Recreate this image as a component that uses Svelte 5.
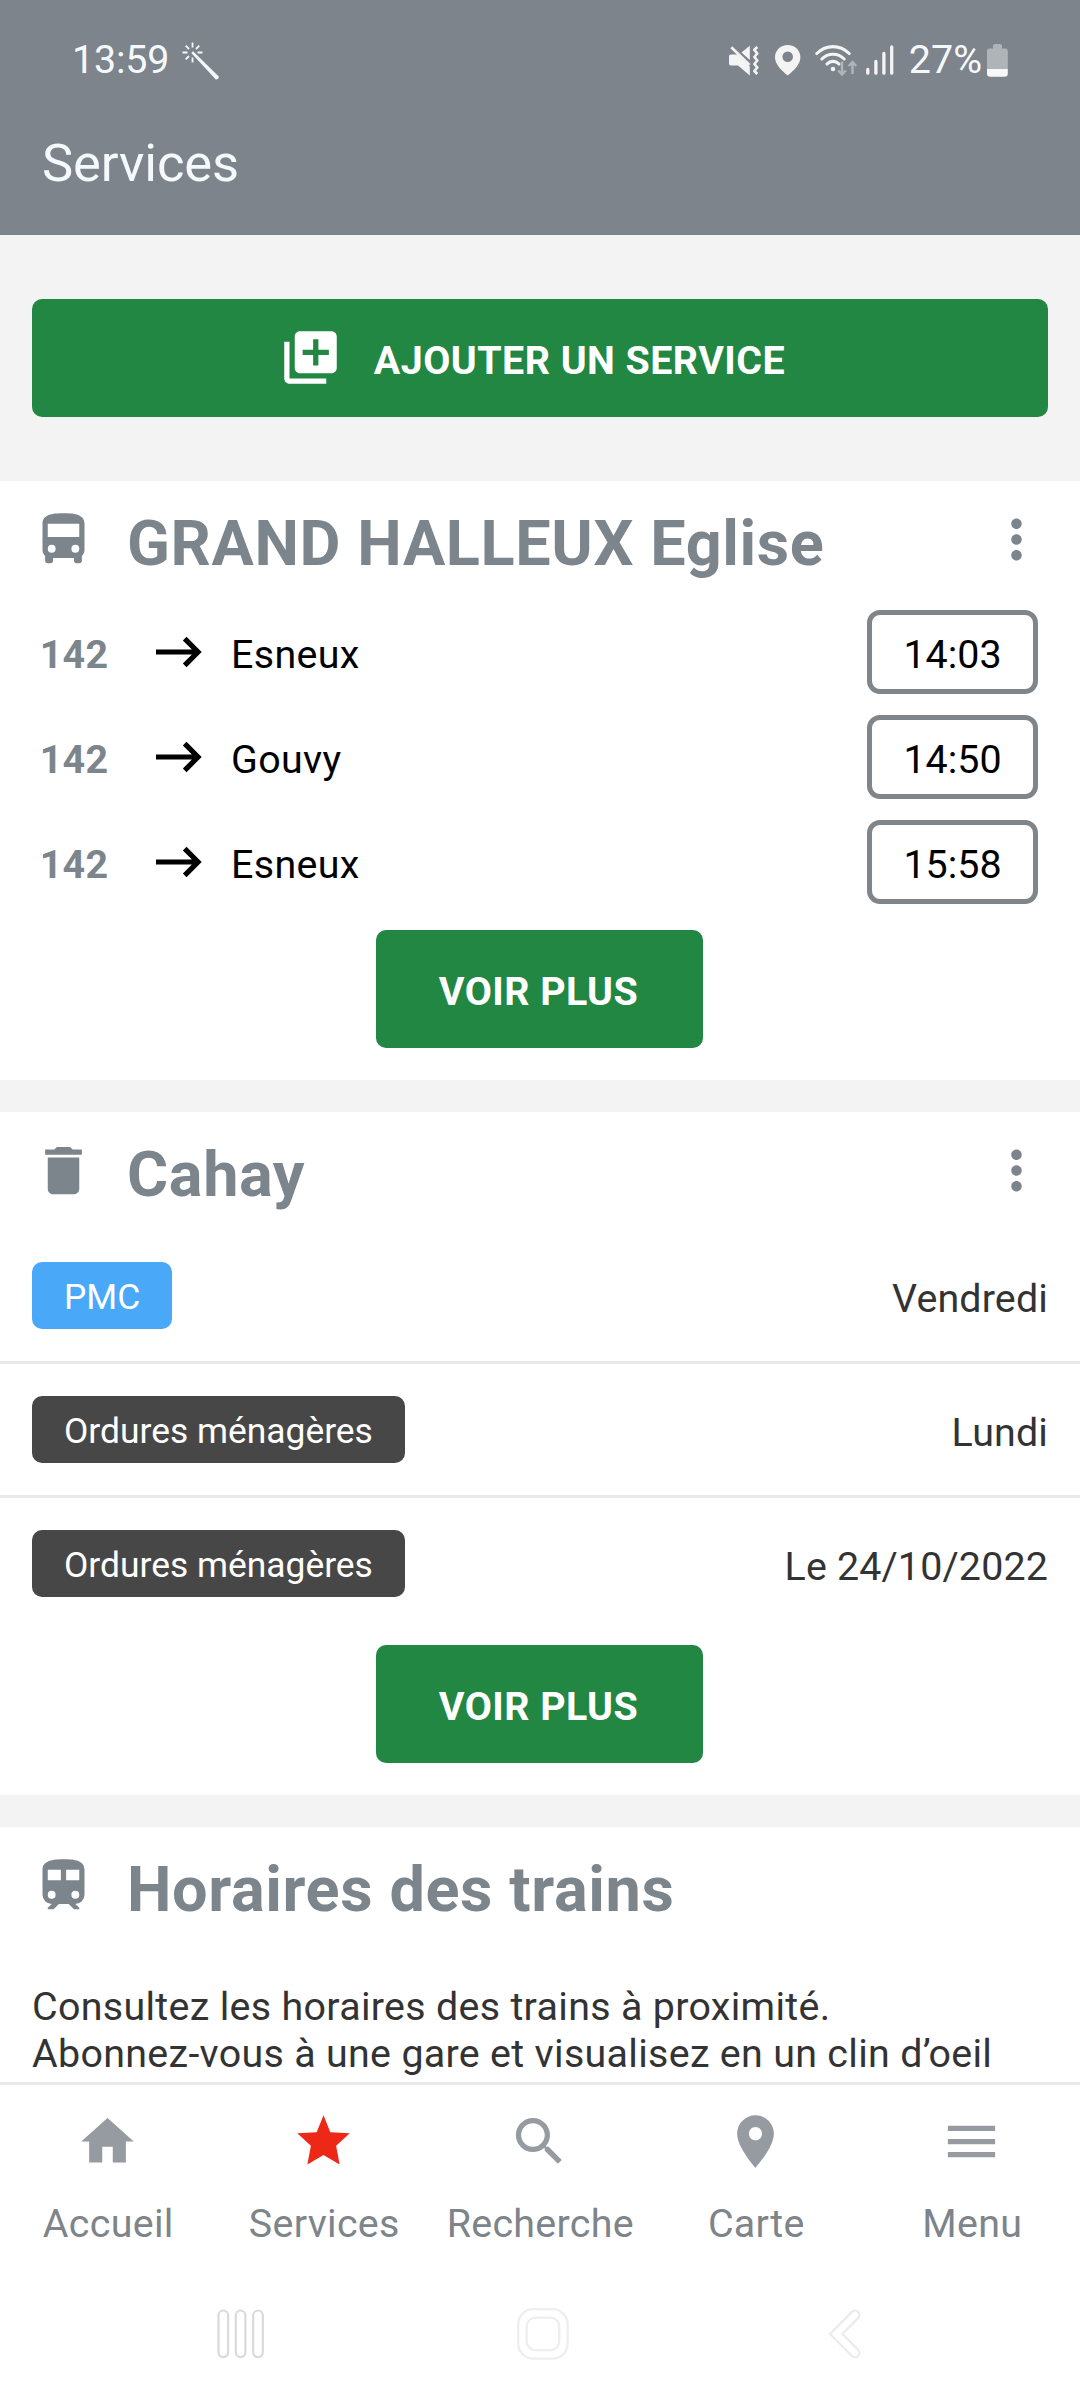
<script lang="ts">
    const icons = {
        bus: "M18,11H6V6H18M16.5,17A1.5,1.5 0 0,1 15,15.5A1.5,1.5 0 0,1 16.5,14A1.5,1.5 0 0,1 18,15.5A1.5,1.5 0 0,1 16.5,17M7.5,17A1.5,1.5 0 0,1 6,15.5A1.5,1.5 0 0,1 7.5,14A1.5,1.5 0 0,1 9,15.5A1.5,1.5 0 0,1 7.5,17M4,16C4,16.88 4.39,17.67 5,18.22V20A1,1 0 0,0 6,21H7A1,1 0 0,0 8,20V19H16V20A1,1 0 0,0 17,21H18A1,1 0 0,0 19,20V18.22C19.61,17.67 20,16.88 20,16V6C20,2.5 16.42,2 12,2C7.58,2 4,2.5 4,6V16Z",
        trash: "M6 19c0 1.1.9 2 2 2h8c1.1 0 2-.9 2-2V7H6v12zM19 4h-3.5l-1-1h-5l-1 1H5v2h14V4z",
        train: "M12,2C8,2 4,2.5 4,6V15.5A3.5,3.5 0 0,0 7.5,19L6,20.5V21H8.23L10.23,19H14L16,21H18V20.5L16.5,19A3.5,3.5 0 0,0 20,15.5V6C20,2.5 16.42,2 12,2M7.5,17A1.5,1.5 0 0,1 6,15.5A1.5,1.5 0 0,1 7.5,14A1.5,1.5 0 0,1 9,15.5A1.5,1.5 0 0,1 7.5,17M11,10H6V6H11V10M13,10V6H18V10H13M16.5,17A1.5,1.5 0 0,1 15,15.5A1.5,1.5 0 0,1 16.5,14A1.5,1.5 0 0,1 18,15.5A1.5,1.5 0 0,1 16.5,17Z",
        more: "M12 8c1.1 0 2-.9 2-2s-.9-2-2-2-2 .9-2 2 .9 2 2 2zm0 2c-1.1 0-2 .9-2 2s.9 2 2 2 2-.9 2-2-.9-2-2-2zm0 6c-1.1 0-2 .9-2 2s.9 2 2 2 2-.9 2-2-.9-2-2-2z",
        add: "M4 6H2v14c0 1.1.9 2 2 2h14v-2H4V6zm16-4H8c-1.1 0-2 .9-2 2v12c0 1.1.9 2 2 2h12c1.1 0 2-.9 2-2V4c0-1.1-.9-2-2-2zm-1 9h-4v4h-2v-4H9V9h4V5h2v4h4v2z",
        home: "M10 20v-6h4v6h5v-8h3L12 3 2 12h3v8z",
        star: "M12 2L14.6 8.5L22 8.85L16.8 13.65L18.15 20.75L12 17.1L5.85 20.75L7.2 13.65L2 8.85L9.4 8.5Z",
        search: "M15.5 14h-.79l-.28-.27C15.41 12.59 16 11.11 16 9.5 16 5.91 13.09 3 9.5 3S3 5.91 3 9.5 5.91 16 9.5 16c1.61 0 3.09-.59 4.23-1.57l.27.28v.79l5 4.99L20.49 19l-4.99-5zm-6 0C7.01 14 5 11.99 5 9.5S7.01 5 9.5 5 14 7.01 14 9.5 11.99 14 9.5 14z",
        place: "M12 2C8.13 2 5 5.13 5 9c0 5.25 7 13 7 13s7-7.75 7-13c0-3.87-3.13-7-7-7zm0 9.5c-1.38 0-2.5-1.12-2.5-2.5s1.12-2.5 2.5-2.5 2.5 1.12 2.5 2.5-1.12 2.5-2.5 2.5z",
        menu: "M3 18h18v-2H3v2zm0-5h18v-2H3v2zm0-7v2h18V6H3z"
    };

    const departures = [
        { line: "142", to: "Esneux", time: "14:03" },
        { line: "142", to: "Gouvy", time: "14:50" },
        { line: "142", to: "Esneux", time: "15:58" }
    ];

    const collections = [
        { label: "PMC", kind: "pmc", day: "Vendredi" },
        { label: "Ordures ménagères", kind: "waste", day: "Lundi" },
        { label: "Ordures ménagères", kind: "waste", day: "Le 24/10/2022" }
    ];

    const tabs = [
        { icon: "home", label: "Accueil" },
        { icon: "star", label: "Services" },
        { icon: "search", label: "Recherche" },
        { icon: "place", label: "Carte" },
        { icon: "menu", label: "Menu" }
    ];

    let activeTab = "Services";
</script>

{#snippet icon(name)}
    <svg class="icon" viewBox="0 0 24 24"><path fill-rule="evenodd" d={icons[name]} /></svg>
{/snippet}

{#snippet cardHeader(name, title, menu)}
    <div class="card-header">
        {@render icon(name)}
        <h2>{title}</h2>
        {#if menu}
            {@render icon("more")}
        {/if}
    </div>
{/snippet}

<div class="app">
    <header>
        <div class="status">
            <span class="clock">13:59</span>
            <!-- magic wand -->
            <svg class="wand" width="38" height="38" viewBox="0 0 38 38">
                <g stroke="#f4f8fb" stroke-width="1.8">
                    <path d="M10.5 0.5v5M10.5 15.5v5M0.5 10.5h5M15.5 10.5h5M3.7 3.7l3.3 3.3M14 7l3.3-3.3M3.7 17.3L7 14" />
                </g>
                <path d="M9.3 10.9L11 9.3L36.8 34.4Q37 37.2 33.8 37.4Z" fill="#f4f8fb" />
            </svg>
            <div class="status-right">
                <!-- muted, vibrating -->
                <svg width="30" height="32" viewBox="0 0 30 32">
                    <path d="M0 11.5Q0 9.5 2 9.5H8L20.8 21.5V30.5L9 20.5H2Q0 20.5 0 18.5Z" fill="#f4f4f4" />
                    <path d="M12.5 7.5L20.8 0.8V15Z" fill="#f4f4f4" />
                    <path d="M2.3 2.3L20.5 20" stroke="#f4f4f4" stroke-width="2.6" />
                    <path d="M28.3 2L25.4 4.8L28.3 8.5L25.4 12L28.3 15.5L25.4 19L28.3 22.5L25.4 26L28.3 29" fill="none" stroke="#f4f4f4" stroke-width="2.7" stroke-linejoin="round" />
                </svg>
                <svg class="loc" width="26" height="31" viewBox="0 0 26 31">
                    <path fill-rule="evenodd" fill="#f4f4f4" d="M12.7 0C5.5 0 0 5.5 0 12.2C0 19 6 25 12.7 30.5C19.5 25 25.4 19 25.4 12.2C25.4 5.5 20 0 12.7 0ZM12.7 6.5A5.3 5.3 0 0 1 12.7 17.1A5.3 5.3 0 0 1 12.7 6.5Z" />
                </svg>
                <svg class="wifi" width="43" height="32" viewBox="0 0 43 32">
                    <g fill="none" stroke="#f4f4f4" stroke-width="3.1" stroke-linecap="round">
                        <path d="M1.8 8.5Q9 1.6 18 1.6T34.2 8.5" />
                        <path d="M6.8 14Q11.5 9.3 18 9.3T29.2 14" />
                        <path d="M12 19Q14.5 16.4 18 16.4T24 19" />
                    </g>
                    <circle cx="18" cy="24" r="2.3" fill="#f4f4f4" />
                    <path d="M27 16.5V29M23.2 25.5L27 29.5L30.8 25.5M37.5 29V17.5M33.7 21L37.5 17L41.3 21" fill="none" stroke="#b0b5b8" stroke-width="2.4" />
                </svg>
                <svg class="signal" width="28" height="30" viewBox="0 0 28 30">
                    <path d="M1.8 28.2V24.5M9.9 28.2V16.5M17.9 28.2V8.5M25.7 28.2V2" stroke="#f4f4f4" stroke-width="3.3" stroke-linecap="round" />
                </svg>
                <span class="percent">27%</span>
                <svg class="battery" width="21" height="33" viewBox="0 0 21 33">
                    <path d="M6 2Q6 0 8 0H13Q15 0 15 2V4.5H18.5Q20.8 4.5 20.8 7V25H0V7Q0 4.5 2.5 4.5H6Z" fill="#aeb4b7" />
                    <path d="M0 25H20.8V29.5Q20.8 32.7 17.5 32.7H3.3Q0 32.7 0 29.5Z" fill="#f8f8f8" />
                </svg>
            </div>
        </div>
        <h1>Services</h1>
    </header>

    <main>
        <div class="add">
            <button class="btn btn-wide">
                {@render icon("add")}
                <span>AJOUTER UN SERVICE</span>
            </button>
        </div>

        <section class="card">
            {@render cardHeader("bus", "GRAND HALLEUX Eglise", true)}
            {#each departures as dep}
                <div class="departure">
                    <span class="line">{dep.line}</span>
                    <svg class="arrow" width="46" height="32" viewBox="0 0 46 32">
                        <path d="M0 16H42M28.7 2.7L42 16L28.7 29.3" />
                    </svg>
                    <span class="dest">{dep.to}</span>
                    <span class="time">{dep.time}</span>
                </div>
            {/each}
            <button class="btn btn-more"><span>VOIR PLUS</span></button>
        </section>

        <section class="card">
            {@render cardHeader("trash", "Cahay", true)}
            {#each collections as item}
                <div class="collection">
                    <span class="badge {item.kind}">{item.label}</span>
                    <span class="day">{item.day}</span>
                </div>
            {/each}
            <button class="btn btn-more"><span>VOIR PLUS</span></button>
        </section>

        <section class="card">
            {@render cardHeader("train", "Horaires des trains", false)}
            <p>Consultez les horaires des trains à proximité.<br />Abonnez-vous à une gare et visualisez en un clin d’oeil</p>
        </section>
    </main>

    <nav class="tabs">
        {#each tabs as tab}
            <div class="tab {tab.label === activeTab ? 'active' : ''}">
                {@render icon(tab.icon)}
                <span>{tab.label}</span>
            </div>
        {/each}
    </nav>

    <!-- android navigation keys -->
    <div class="keys">
        <svg width="48" height="52" viewBox="0 0 48 52">
            <g fill="none" stroke="#dadada" stroke-width="2.2">
                <rect x="1.5" y="2.5" width="9.6" height="46.6" rx="4.8" />
                <rect x="18.8" y="2.5" width="9.6" height="46.6" rx="4.8" />
                <rect x="36.2" y="2.5" width="9.6" height="46.6" rx="4.8" />
            </g>
        </svg>
        <svg class="key-home" width="52" height="52" viewBox="0 0 52 52">
            <g fill="none" stroke="#eeeeee" stroke-width="2.3">
                <rect x="1.2" y="1.2" width="49.4" height="49.4" rx="15" />
                <rect x="9.6" y="9.6" width="32.6" height="32.6" rx="9" />
            </g>
        </svg>
        <svg class="key-back" width="34" height="52" viewBox="0 0 34 52">
            <path d="M27 7L8.2 25.9L27 44.8" fill="none" stroke="#ebebeb" stroke-width="11" stroke-linecap="round" />
            <path d="M27 7L8.2 25.9L27 44.8" fill="none" stroke="#fff" stroke-width="6.6" stroke-linecap="round" />
        </svg>
    </div>
</div>

<style>
:global(body) {
    margin: 0;
    background-color: #fff;
}

.app {
    display: flex;
    flex-direction: column;
    width: 1080px;
    height: 2400px;
    overflow: hidden;
    font-family: Roboto, "Noto Sans", sans-serif;
    font-size: 39.4px;
    line-height: 47px;
    color: #333;
}

.icon {
    width: 63px;
    height: 63px;
    flex: none;
    fill: currentColor;
}

/* Header */
header {
    height: 235px;
    flex: none;
    background-color: #7d848b;
    color: #f6f9fb;
}

.status {
    display: flex;
    align-items: flex-start;
    height: 80px;
    padding: 36px 72px 0 72px;
    box-sizing: border-box;
}

.clock {
    letter-spacing: -0.2px;
}

.wand {
    margin: 6px 0 0 13px;
}

.status-right {
    display: flex;
    align-items: flex-start;
    margin-left: auto;
}

.status-right svg {
    margin-top: 9px;
}

.status-right .loc {
    margin-left: 16px;
}

.status-right .wifi {
    margin-left: 14px;
}

.status-right .signal {
    margin-left: 8px;
}

.percent {
    margin-left: 15px;
}

.status-right .battery {
    margin: 8px 0 0 5px;
}

h1 {
    margin: 52px 0 0 42px;
    font-size: 52.5px;
    line-height: 62px;
    font-weight: 400;
    letter-spacing: -0.1px;
}

/* Content */
main {
    flex: 1;
    min-height: 0;
    overflow: hidden;
    background-color: #f3f3f3;
}

.add {
    padding: 64px 32px;
}

.btn {
    display: flex;
    align-items: center;
    justify-content: center;
    height: 118px;
    border: none;
    border-radius: 10px;
    background-color: #228743;
    color: #fff;
    font: inherit;
    font-weight: 700;
    letter-spacing: 0.45px;
}

.btn span {
    padding-top: 5px;
}

.btn-wide {
    width: 100%;
    padding-right: 22px;
    gap: 32px;
}

.btn-wide .icon,
.btn-wide :global(.icon) {
    margin-bottom: 1px;
}

.btn-more {
    width: 327px;
    margin: 16px auto 0 376px;
    padding-right: 8px;
}

.card {
    background-color: #fff;
    padding-bottom: 32px;
    margin-bottom: 32px;
}

.card-header {
    display: flex;
    align-items: flex-start;
    height: 118px;
    padding: 27px 32px 0 31.5px;
    box-sizing: border-box;
    color: #7d858c;
}

.card-header h2 {
    flex: 1;
    margin: -1px 0 0 32.5px;
    font-size: 63px;
    line-height: 74px;
    font-weight: 700;
    letter-spacing: 0.6px;
}

/* Bus departures */
.departure {
    display: flex;
    align-items: center;
    height: 105px;
    padding: 0 42px 0 31.5px;
    color: #000;
}

.line {
    width: 85px;
    padding-top: 5px;
    text-align: center;
    font-weight: 700;
    letter-spacing: 0.3px;
    color: #7d858c;
}

.arrow {
    margin-left: 39px;
}

.arrow path {
    fill: none;
    stroke: #000;
    stroke-width: 5.2;
}

.dest {
    flex: 1;
    margin-left: 29.5px;
    padding-top: 5px;
    letter-spacing: 0.35px;
}

.time {
    width: 171px;
    height: 84px;
    box-sizing: border-box;
    border: 5px solid #7f8589;
    border-radius: 13px;
    padding-top: 3px;
    line-height: 74px;
    text-align: center;
}

/* Waste collections */
.collection {
    display: flex;
    align-items: center;
    justify-content: space-between;
    padding: 32px;
    border-bottom: 3px solid #e9e9e9;
}

.collection:nth-child(4) {
    border-bottom: none;
}

.badge {
    height: 67px;
    box-sizing: border-box;
    padding: 3px 32px 0;
    border-radius: 10px;
    color: #fff;
    font-size: 35.4px;
    line-height: 64px;
}

.pmc {
    background-color: #49a9f8;
}

.waste {
    background-color: #474747;
}

.day {
    padding-top: 5px;
    letter-spacing: 0.15px;
}

p {
    margin: 0;
    padding: 38px 0 0 32px;
    letter-spacing: 0.31px;
}

/* Bottom tabs */
.tabs {
    display: flex;
    flex: none;
    height: 187px;
    box-sizing: border-box;
    border-top: 3px solid #e9e9e9;
    background-color: #fff;
}

.tab {
    display: flex;
    flex-direction: column;
    align-items: center;
    width: 216px;
    padding: 25px 1px 0 0;
    box-sizing: border-box;
    color: #7d848a;
}

.tab .icon {
    color: #959ba0;
}

.tab.active .icon {
    color: #ed2816;
}

.tab span {
    margin: 27px 0 0 1.5px;
    letter-spacing: 0.3px;
}

.keys {
    display: flex;
    flex: none;
    height: 131px;
    padding: 39px 0 0 217px;
    box-sizing: border-box;
}

.key-home {
    margin-left: 252px;
}

.key-back {
    margin-left: 259px;
}
</style>
